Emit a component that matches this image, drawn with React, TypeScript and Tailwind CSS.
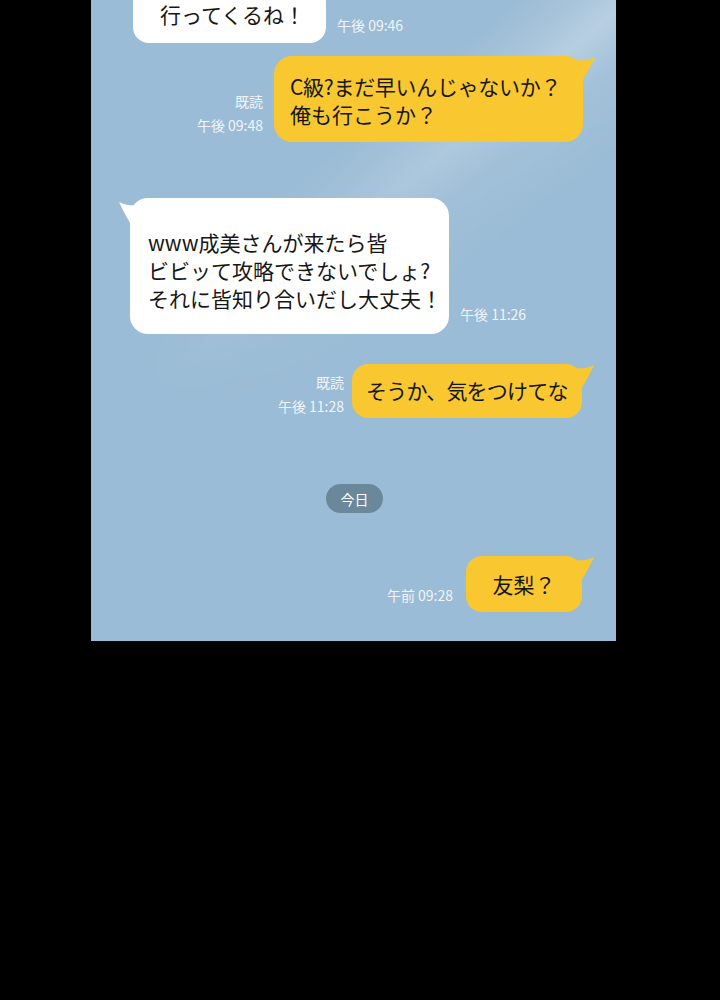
import React from 'react';

const YELLOW = 'bg-[#f9c830]';

const TailRight = () => (
    <svg className="absolute -right-[13px] top-[1px]" width="26" height="26" viewBox="0 0 26 26">
        <path d="M0 3 Q16 5 25 0 Q20 11 12 24 L0 24 Z" fill="#f9c830" />
    </svg>
);

const TailLeft = () => (
    <svg className="absolute -left-[12px] top-[4px]" width="26" height="26" viewBox="0 0 26 26">
        <path d="M26 3 Q10 5 1 0 Q6 11 14 24 L26 24 Z" fill="#ffffff" />
    </svg>
);

const TimeStamp = ({ time, read, pb }: { time: string; read?: boolean; pb: string }) => (
    <div className={`shrink-0 text-[14px] leading-[24px] text-[#f1f5f9] ${pb} ${read ? 'text-right' : 'text-left'}`}>
        {read && <div>既読</div>}
        <div>{time}</div>
    </div>
);

const App: React.FC = () => {
    return (
        <div className="min-h-[1000px] w-[720px] bg-black font-['Noto_Sans_CJK_JP','Noto_Sans',sans-serif]">
            <div className="relative ml-[91px] h-[641px] w-[525px] overflow-hidden bg-[#9bbcd6]">
                {/* light streak */}
                <div className="absolute inset-0 bg-[linear-gradient(141deg,transparent_0%,transparent_32%,rgba(255,255,255,0.14)_37%,rgba(255,255,255,0.3)_41%,rgba(255,255,255,0.1)_46%,transparent_55%)] [mask-image:radial-gradient(circle_at_100%_0%,black_0%,rgba(0,0,0,0.55)_35%,transparent_75%)]" />

                <div className="relative flex flex-col text-[21px] leading-[28px] text-[#161616]">
                    {/* 1 */}
                    <div className="-mt-[14px] flex items-end gap-[11px] pl-[42px]">
                        <div className="w-[193px] rounded-[16px] bg-white pt-[14px] pb-[15px] pl-[27px]">
                            行ってくるね！
                        </div>
                        <TimeStamp time="午後 09:46" pb="pb-[6px]" />
                    </div>

                    {/* 2 */}
                    <div className="mt-[13px] flex items-end justify-end gap-[11px] pr-[33px]">
                        <TimeStamp time="午後 09:48" read pb="pb-[5px]" />
                        <div className={`relative w-[309px] rounded-[18px] ${YELLOW} pt-[16px] pb-[14px] pl-[16px]`}>
                            <TailRight />
                            <div className="relative whitespace-nowrap tracking-[-0.3px]">C級?まだ早いんじゃないか？</div>
                            <div className="relative whitespace-nowrap">俺も行こうか？</div>
                        </div>
                    </div>

                    {/* 3 */}
                    <div className="mt-[56px] flex items-end gap-[11px] pl-[39px]">
                        <div className="relative w-[319px] rounded-[18px] bg-white pt-[30px] pb-[22px] pl-[18px]">
                            <TailLeft />
                            <div className="relative whitespace-nowrap">www成美さんが来たら皆</div>
                            <div className="relative whitespace-nowrap">ビビッて攻略できないでしょ?</div>
                            <div className="relative whitespace-nowrap">それに皆知り合いだし大丈夫！</div>
                        </div>
                        <TimeStamp time="午後 11:26" pb="pb-[8px]" />
                    </div>

                    {/* 4 */}
                    <div className="mt-[30px] flex items-end justify-end gap-[8px] pr-[34px]">
                        <TimeStamp time="午後 11:28" read pb="pb-0" />
                        <div className={`relative w-[230px] rounded-[16px] ${YELLOW} pt-[12px] pb-[14px] pl-[14px]`}>
                            <TailRight />
                            <div className="relative whitespace-nowrap tracking-[-0.8px]">そうか、気をつけてな</div>
                        </div>
                    </div>

                    {/* date pill */}
                    <div className="mt-[66px] flex justify-center pl-[2px]">
                        <div className="flex h-[29px] w-[57px] items-center justify-center rounded-full bg-[#6b879a] text-[14px] leading-[20px] text-white">
                            今日
                        </div>
                    </div>

                    {/* 6 */}
                    <div className="mt-[43px] flex items-end justify-end gap-[13px] pr-[34px]">
                        <TimeStamp time="午前 09:28" pb="pb-[5px]" />
                        <div className={`relative w-[116px] rounded-[16px] ${YELLOW} pt-[14px] pb-[14px] text-center`}>
                            <TailRight />
                            <div className="relative whitespace-nowrap">友梨？</div>
                        </div>
                    </div>
                </div>
            </div>
        </div>
    );
};

export default App;
